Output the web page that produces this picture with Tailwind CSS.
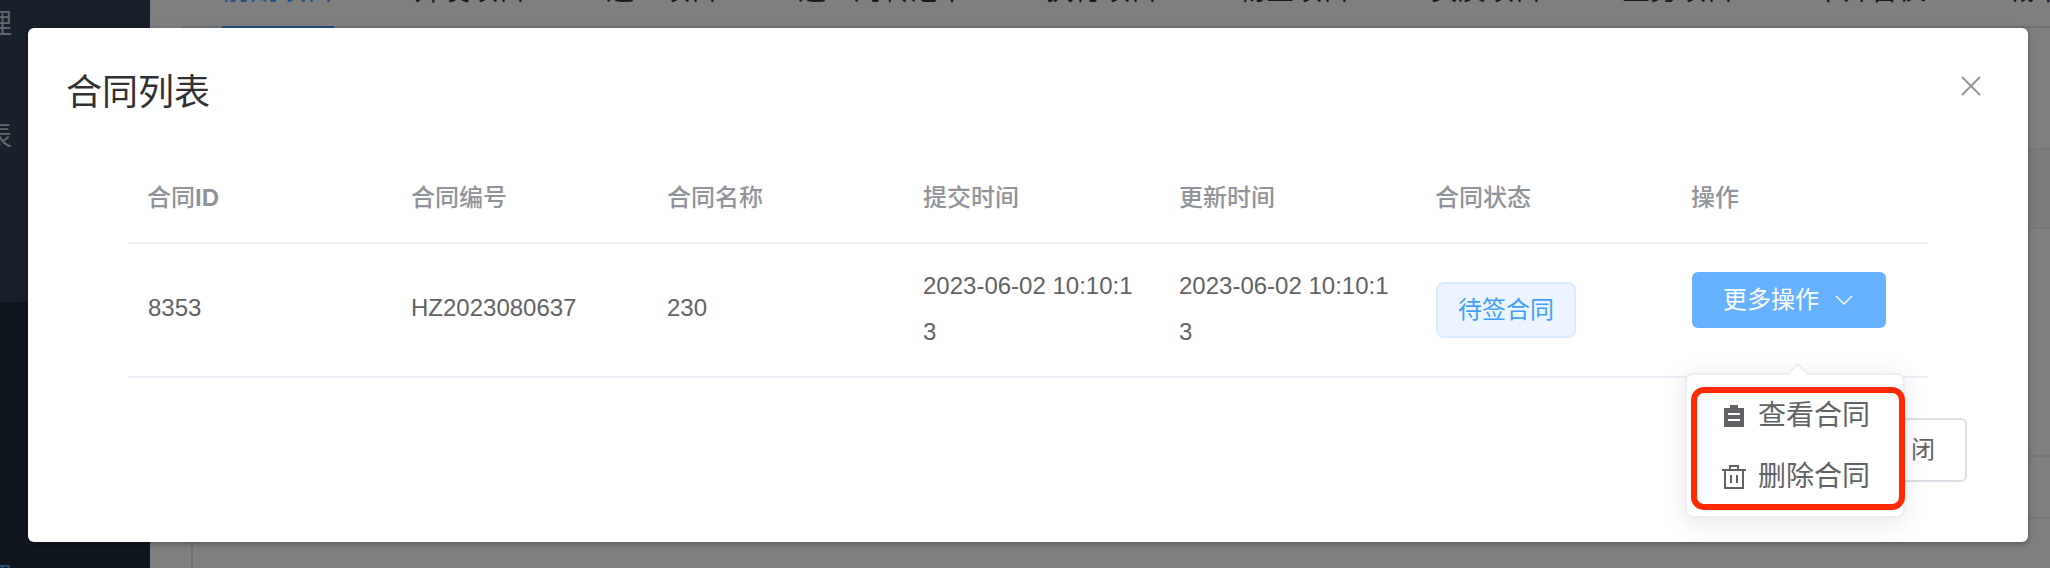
<!DOCTYPE html>
<html lang="zh-CN">
<head>
    <meta charset="UTF-8">
    <title>合同列表</title>
    <script src="https://cdn.jsdelivr.net/npm/@tailwindcss/browser@4"></script>
</head>
<body class="w-[2050px] h-[568px] overflow-hidden bg-white font-['Liberation_Sans','Noto_Sans_CJK_SC',sans-serif]">
    <div class="relative flex w-[2050px] h-[568px] overflow-hidden">
        <!-- Sidebar -->
        <aside class="w-[150px] h-full flex flex-col shrink-0 bg-[#1f2d3d] text-[28px] leading-[28px] text-[#bfcbd9]">
            <div class="h-[302px] shrink-0 bg-[#304156] overflow-hidden">
                <div class="ml-[-44px] mt-[11px] whitespace-nowrap">管理</div>
                <div class="ml-[-44px] mt-[84px] whitespace-nowrap">报表</div>
            </div>
            <div class="ml-[-16px] mt-[263px] shrink-0 whitespace-nowrap text-[#409eff]">理</div>
        </aside>

        <!-- Page behind the dialog -->
        <main class="flex-1 flex flex-col min-w-0">
            <div class="h-[28px] shrink-0 ml-[32px] flex items-start gap-[80px] pl-[40px] border-b-2 border-[#dfe4ed] text-[28px] leading-[28px] whitespace-nowrap text-[#303133]">
                <div class="relative h-[26px] text-[#409eff]">
                    <span class="block mt-[-23px]">前期项目</span>
                    <span class="absolute left-0 right-0 bottom-[-2px] h-[2px] bg-[#409eff]"></span>
                </div>
                <div class="h-[26px]"><span class="block mt-[-23px]">开发项目</span></div>
                <div class="h-[26px]"><span class="block mt-[-23px]">退工项目</span></div>
                <div class="h-[26px]"><span class="block mt-[-23px]">退工周转池中</span></div>
                <div class="h-[26px]"><span class="block mt-[-23px]">执行项目</span></div>
                <div class="h-[26px]"><span class="block mt-[-23px]">物业项目</span></div>
                <div class="h-[26px]"><span class="block mt-[-23px]">实质项目</span></div>
                <div class="h-[26px]"><span class="block mt-[-23px]">业务项目</span></div>
                <div class="h-[26px]"><span class="block mt-[-23px]">中介合伙</span></div>
                <div class="h-[26px]"><span class="block mt-[-23px]">城市项目</span></div>
            </div>
            <div class="flex-1 ml-[41px] border-l-2 border-[#dfe4ed]">
                <div class="h-[122px] border-b-2 border-[#ebeef5]"></div>
                <div class="h-[79px] border-b-2 border-[#ebeef5] bg-[#f5f7fa]"></div>
                <div class="h-[228px] border-b-2 border-[#ebeef5]"></div>
                <div class="h-[62px] border-b-2 border-[#ebeef5]"></div>
            </div>
        </main>

        <!-- Overlay -->
        <div class="absolute inset-0 bg-black/50 pt-[28px] pl-[28px]">
            <section class="relative w-[2000px] h-[514px] bg-white rounded-[6px] shadow-[0_2px_6px_rgba(0,0,0,0.3)] px-[100px] pt-[47px]">
                <h2 class="ml-[-62px] text-[36px] leading-[36px] text-[#303133]">合同列表</h2>
                <button class="absolute right-[46px] top-[47px] w-[22px] h-[22px] text-[#909399]">
                    <svg viewBox="0 0 22 22" class="w-[22px] h-[22px]" fill="none" stroke="currentColor" stroke-width="1.8"><path d="M2 2l18 18M20 2L2 20"/></svg>
                </button>

                <!-- Table -->
                <div class="mt-[41px] w-[1800px]">
                    <div class="grid grid-cols-[263px_256px_256px_256px_256px_256px_257px] h-[92px] pt-[2px] border-b-2 border-[#ebeef5] items-center text-[24px] text-[#909399] font-medium">
                        <div class="pl-[19px]">合同<b>ID</b></div>
                        <div class="pl-[20px]">合同编号</div>
                        <div class="pl-[20px]">合同名称</div>
                        <div class="pl-[20px]">提交时间</div>
                        <div class="pl-[20px]">更新时间</div>
                        <div class="pl-[20px]">合同状态</div>
                        <div class="pl-[20px]">操作</div>
                    </div>
                    <div class="grid grid-cols-[263px_256px_256px_256px_256px_256px_257px] h-[134px] border-b-2 border-[#ebeef5] items-center text-[24px] leading-[46px] text-[#606266]">
                        <div class="pl-[20px] mt-[-5px]">8353</div>
                        <div class="pl-[20px] mt-[-5px]">HZ2023080637</div>
                        <div class="pl-[20px] mt-[-5px]">230</div>
                        <div class="px-[20px] mt-[-3px] break-all">2023-06-02 10:10:13</div>
                        <div class="px-[20px] mt-[-3px] break-all">2023-06-02 10:10:13</div>
                        <div class="pl-[21px]">
                            <span class="flex items-center justify-center w-[140px] h-[56px] rounded-[8px] border-2 border-[#d9ecff] bg-[#ecf5ff] text-[#409eff]">待签合同</span>
                        </div>
                        <div class="pl-[21px] mt-[-20px]">
                            <button class="flex items-center w-[194px] h-[56px] pl-[31px] rounded-[6px] bg-[#66b1ff] text-white">
                                更多操作
                                <svg viewBox="0 0 18 10" class="w-[18px] h-[10px] ml-[16px]" fill="none" stroke="currentColor" stroke-width="1.4"><path d="M1 1l8 8 8-8"/></svg>
                            </button>
                        </div>
                    </div>
                </div>

                <!-- Footer -->
                <div class="flex justify-end mt-[40px] mr-[-39px]">
                    <button class="flex items-center justify-end pr-[30px] w-[111px] h-[64px] rounded-[6px] border-2 border-[#dcdfe6] bg-white text-[24px] text-[#606266] whitespace-pre">关 闭</button>
                </div>

                <!-- Dropdown menu -->
                <div class="absolute left-[1657px] top-[345px] w-[220px] h-[145px] pt-[10px] pl-[35px] rounded-[8px] border-2 border-[#ebeef5] bg-white shadow-[0_4px_24px_rgba(0,0,0,0.1)] text-[28px] text-[#606266]">
                    <span class="absolute left-[103px] top-[-9px] w-[16px] h-[16px] rotate-45 bg-white border-l-2 border-t-2 border-[#ebeef5]"></span>
                    <div class="flex items-center h-[61px] gap-[12px] whitespace-nowrap">
                        <svg viewBox="0 0 24 24" class="w-[24px] h-[24px]" fill="#606266">
                            <path d="M8 1h8v3h6v19H2V4h6z"/>
                            <path d="M6 10h12M6 16h12" stroke="#fff" stroke-width="2"/>
                        </svg>
                        查看合同
                    </div>
                    <div class="flex items-center h-[61px] gap-[12px] whitespace-nowrap">
                        <svg viewBox="0 0 24 24" class="w-[24px] h-[24px]" fill="none" stroke="#606266" stroke-width="2">
                            <path d="M0 5h24M8 5V1h8v4M3 5v18h18V5M9 10v8M15 10v8"/>
                        </svg>
                        删除合同
                    </div>
                </div>

                <!-- Red highlight -->
                <div class="absolute left-[1663px] top-[359px] w-[214px] h-[123px] rounded-[13px] border-[6px] border-[#ff2a00]"></div>
            </section>
        </div>
    </div>
</body>
</html>
